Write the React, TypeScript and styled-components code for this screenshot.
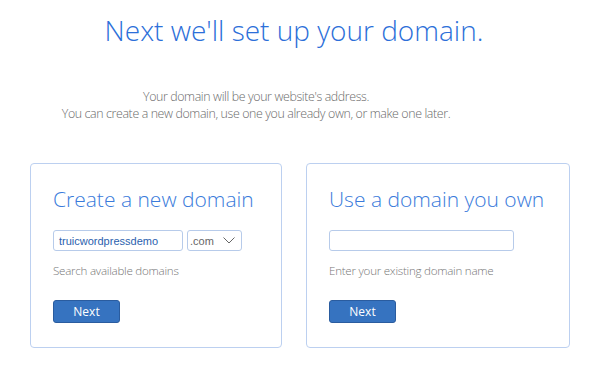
import styled, { createGlobalStyle } from 'styled-components';

const GlobalStyle = createGlobalStyle`
  body {
    margin: 0;
    background: #ffffff;
    font-family: "Open Sans", "Liberation Sans", sans-serif;
  }
`;

const Page = styled.div`
  width: 600px;
  padding-top: 11px;
`;

const Heading = styled.h1`
  margin: 0;
  text-align: center;
  padding-right: 12px;
  font-size: 28px;
  font-weight: 300;
  line-height: 38px;
  color: #2c6fd9;
`;

const Intro = styled.p`
  margin: 39px 0 0;
  padding-right: 88px;
  text-align: center;
  font-size: 12.4px;
  font-weight: 300;
  letter-spacing: -0.38px;
  line-height: 17px;
  color: #6a6a6a;
`;

const Cards = styled.div`
  display: flex;
  gap: 24px;
  margin-top: 41px;
  padding-left: 30px;
`;

const Card = styled.section<{ $width: number }>`
  box-sizing: border-box;
  width: ${(p) => p.$width}px;
  height: 185px;
  padding: 21px 22px 0;
  border: 1px solid #bcd0f0;
  border-radius: 4px;
`;

const CardTitle = styled.h2`
  margin: 0;
  font-size: 21px;
  font-weight: 300;
  line-height: 28px;
  color: #3a7bdb;
  white-space: nowrap;
`;

const FieldRow = styled.div`
  display: flex;
  gap: 4px;
  margin-top: 17px;
`;

const TextBox = styled.div<{ $width: number }>`
  box-sizing: border-box;
  display: flex;
  align-items: center;
  width: ${(p) => p.$width}px;
  height: 21px;
  padding: 0 5px;
  border: 1px solid #b7cbea;
  border-radius: 3px;
  font-family: "Liberation Sans", Arial, sans-serif;
  font-size: 11px;
  color: #2b5fae;
`;

const Select = styled.div`
  box-sizing: border-box;
  display: flex;
  align-items: center;
  justify-content: space-between;
  width: 55px;
  height: 21px;
  padding: 0 6px 0 2px;
  border: 1px solid #b7cbea;
  border-radius: 3px;
  font-family: "Liberation Sans", Arial, sans-serif;
  font-size: 11px;
  color: #666;
`;

const Hint = styled.p`
  margin: 12px 0 0;
  font-size: 11.6px;
  font-weight: 300;
  letter-spacing: -0.25px;
  line-height: 16px;
  color: #777;
`;

const NextButton = styled.button`
  display: block;
  box-sizing: border-box;
  width: 67px;
  height: 23px;
  margin-top: 21px;
  padding: 0;
  border: 1px solid #2a5c9f;
  border-radius: 3px;
  background: #3673c0;
  color: #ffffff;
  font-family: "Open Sans", "Liberation Sans", sans-serif;
  font-size: 12px;
`;

const Chevron = () => (
  <svg width="12" height="7" viewBox="0 0 12 7" fill="none">
    <path d="M0.5 0.5 L6 6 L11.5 0.5" stroke="#666" strokeWidth="1" />
  </svg>
);

export default function App() {
  return (
    <Page>
      <GlobalStyle />
      <Heading>Next we'll set up your domain.</Heading>
      <Intro>
        Your domain will be your website's address.
        <br />
        You can create a new domain, use one you already own, or make one later.
      </Intro>
      <Cards>
        <Card $width={252}>
          <CardTitle>Create a new domain</CardTitle>
          <FieldRow>
            <TextBox $width={130}>truicwordpressdemo</TextBox>
            <Select>
              .com
              <Chevron />
            </Select>
          </FieldRow>
          <Hint>Search available domains</Hint>
          <NextButton>Next</NextButton>
        </Card>
        <Card $width={264}>
          <CardTitle>Use a domain you own</CardTitle>
          <FieldRow>
            <TextBox $width={185} />
          </FieldRow>
          <Hint>Enter your existing domain name</Hint>
          <NextButton>Next</NextButton>
        </Card>
      </Cards>
    </Page>
  );
}
